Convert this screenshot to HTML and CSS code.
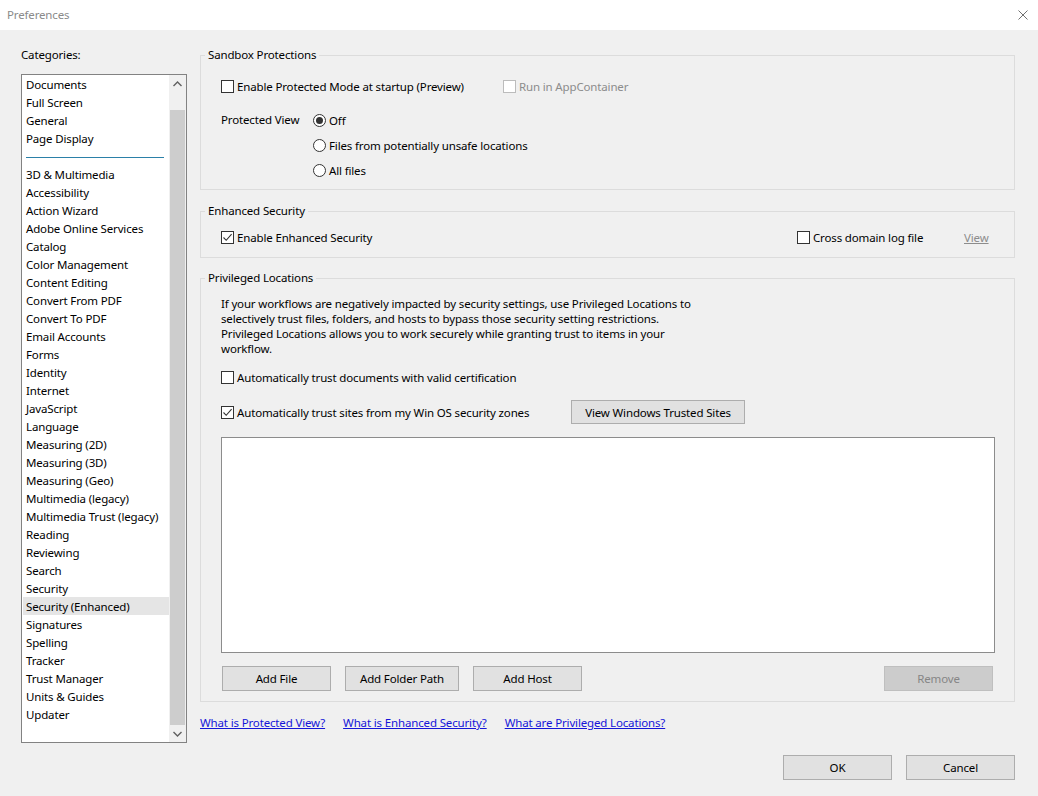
FILE: index.html
```html
<!DOCTYPE html>
<html lang="en">
<head>
  <meta charset="UTF-8" />
  <title>Preferences</title>
  <link rel="stylesheet" href="styles.css">
</head>
<body>

  <div class="titlebar">
    <span class="title">Preferences</span>
    <svg class="close-x" width="10" height="10" viewBox="0 0 10 10">
      <path d="M0.5 0.5 L9.5 9.5 M9.5 0.5 L0.5 9.5" stroke="#707070" stroke-width="1" fill="none"/>
    </svg>
  </div>

  <div class="main">
    <div class="sidebar">
      <div class="cat-label">Categories:</div>
      <div class="listbox">
        <div class="items">
          <div class="item">Documents</div>
          <div class="item">Full Screen</div>
          <div class="item">General</div>
          <div class="item">Page Display</div>
          <div class="separator"></div>
          <div class="item">3D &amp; Multimedia</div>
          <div class="item">Accessibility</div>
          <div class="item">Action Wizard</div>
          <div class="item">Adobe Online Services</div>
          <div class="item">Catalog</div>
          <div class="item">Color Management</div>
          <div class="item">Content Editing</div>
          <div class="item">Convert From PDF</div>
          <div class="item">Convert To PDF</div>
          <div class="item">Email Accounts</div>
          <div class="item">Forms</div>
          <div class="item">Identity</div>
          <div class="item">Internet</div>
          <div class="item">JavaScript</div>
          <div class="item">Language</div>
          <div class="item">Measuring (2D)</div>
          <div class="item">Measuring (3D)</div>
          <div class="item">Measuring (Geo)</div>
          <div class="item">Multimedia (legacy)</div>
          <div class="item">Multimedia Trust (legacy)</div>
          <div class="item">Reading</div>
          <div class="item">Reviewing</div>
          <div class="item">Search</div>
          <div class="item">Security</div>
          <div class="item selected">Security (Enhanced)</div>
          <div class="item">Signatures</div>
          <div class="item">Spelling</div>
          <div class="item">Tracker</div>
          <div class="item">Trust Manager</div>
          <div class="item">Units &amp; Guides</div>
          <div class="item">Updater</div>
        </div>
        <div class="scrollbar">
          <div class="sb-btn up">
            <svg width="9" height="6" viewBox="0 0 9 6"><path d="M0.5 5 L4.5 1 L8.5 5" stroke="#606060" stroke-width="1.4" fill="none"/></svg>
          </div>
          <div class="sb-track"><div class="sb-thumb"></div></div>
          <div class="sb-btn down">
            <svg width="9" height="6" viewBox="0 0 9 6"><path d="M0.5 1 L4.5 5 L8.5 1" stroke="#606060" stroke-width="1.4" fill="none"/></svg>
          </div>
        </div>
      </div>
    </div>

    <div class="content">
      <fieldset class="group">
        <legend>Sandbox Protections</legend>
        <div class="group-body sandbox">
          <div class="row">
            <label class="check wide">
              <span class="box"></span>
              Enable Protected Mode at startup (Preview)
            </label>
            <label class="check disabled">
              <span class="box"></span>
              Run in AppContainer
            </label>
          </div>
          <div class="pv">
            <div class="pv-label">Protected View</div>
            <div class="radios">
              <label class="radio">
                <svg width="13" height="13" viewBox="0 0 13 13"><circle cx="6.5" cy="6.5" r="6" fill="#fff" stroke="#333"/><circle cx="6.5" cy="6.5" r="3.5" fill="#333"/></svg>
                Off
              </label>
              <label class="radio">
                <svg width="13" height="13" viewBox="0 0 13 13"><circle cx="6.5" cy="6.5" r="6" fill="#fff" stroke="#333"/></svg>
                Files from potentially unsafe locations
              </label>
              <label class="radio">
                <svg width="13" height="13" viewBox="0 0 13 13"><circle cx="6.5" cy="6.5" r="6" fill="#fff" stroke="#333"/></svg>
                All files
              </label>
            </div>
          </div>
        </div>
      </fieldset>

      <fieldset class="group enhanced">
        <legend>Enhanced Security</legend>
        <div class="group-body">
          <div class="row">
            <label class="check">
              <span class="box"><svg width="11" height="11" viewBox="0 0 11 11"><path d="M1.5 5.5 L4.2 8.3 L9.6 2.2" stroke="#333" stroke-width="1.1" fill="none"/></svg></span>
              Enable Enhanced Security
            </label>
            <label class="check cross">
              <span class="box"></span>
              Cross domain log file
            </label>
            <span class="view-link">View</span>
          </div>
        </div>
      </fieldset>

      <fieldset class="group privileged">
        <legend>Privileged Locations</legend>
        <div class="group-body priv-body">
          <p class="info">
            If your workflows are negatively impacted by security settings, use Privileged Locations to<br>
            selectively trust files, folders, and hosts to bypass those security setting restrictions.<br>
            Privileged Locations allows you to work securely while granting trust to items in your<br>
            workflow.
          </p>
          <div class="row first">
            <label class="check">
              <span class="box"></span>
              Automatically trust documents with valid certification
            </label>
          </div>
          <div class="row tall">
            <label class="check zones">
              <span class="box"><svg width="11" height="11" viewBox="0 0 11 11"><path d="M1.5 5.5 L4.2 8.3 L9.6 2.2" stroke="#333" stroke-width="1.1" fill="none"/></svg></span>
              Automatically trust sites from my Win OS security zones
            </label>
            <button class="btn trusted">View Windows Trusted Sites</button>
          </div>
          <div class="locations"></div>
          <div class="loc-buttons">
            <button class="btn add-file">Add File</button>
            <button class="btn add-folder">Add Folder Path</button>
            <button class="btn add-host">Add Host</button>
            <button class="btn remove" disabled>Remove</button>
          </div>
        </div>
      </fieldset>

      <div class="links">
        <a href="#">What is Protected View?</a>
        <a href="#">What is Enhanced Security?</a>
        <a href="#">What are Privileged Locations?</a>
      </div>

      <div class="footer">
        <button class="btn">OK</button>
        <button class="btn">Cancel</button>
      </div>
    </div>
  </div>

</body>
</html>
```

FILE: styles.css
```css
body {
  margin: 0;
  padding: 0;
  width: 1038px;
  height: 796px;
  overflow: hidden;
  background-color: #f0f0f0;
  font-family: "Noto Sans", "Open Sans", sans-serif;
  font-size: 11.5px;
  letter-spacing: -0.15px;
  color: #000;
}

/* Barre de titre */
.titlebar {
  height: 30px;
  background: #fff;
  display: flex;
  align-items: center;
  justify-content: space-between;
  padding: 0 10px 0 7px;
}

.title {
  color: #8a8a8a;
  line-height: 16px;
}

.main {
  display: flex;
  padding: 17px 0 0 21px;
}

/* Colonne des categories */
.sidebar {
  width: 166px;
}

.cat-label {
  line-height: 16px;
  margin-bottom: 11px;
}

.listbox {
  height: 669px;
  box-sizing: border-box;
  border: 1px solid #828282;
  background: #fff;
  display: flex;
}

.items {
  flex: 1;
}

.item {
  height: 18px;
  line-height: 19px;
  margin-left: 1px;
  padding-left: 3px;
  white-space: nowrap;
}

.item.selected {
  background-color: #e5e5e5;
}

.separator {
  height: 1px;
  width: 138px;
  margin: 10px 0 7px 4px;
  background-color: #2b80a8;
}

.scrollbar {
  width: 17px;
  background: #f0f0f0;
  display: flex;
  flex-direction: column;
}

.sb-btn {
  height: 17px;
  display: flex;
  align-items: center;
  justify-content: center;
}

.sb-track {
  flex: 1;
  padding-top: 18px;
  display: flex;
}

.sb-thumb {
  flex: 1;
  margin: 0 1px;
  background: #cdcdcd;
}

/* Partie droite */
.content {
  width: 815px;
  margin-left: 13px;
}

.group {
  margin: 0;
  padding: 0;
  border: 1px solid #dcdcdc;
  min-width: 0;
}

.group legend {
  margin-left: 4px;
  padding: 0 3px;
  line-height: 16px;
}

.group-body {
  padding: 9px 0 11px 20px;
}

.sandbox {
  padding: 14px 0 10px 20px;
}

.enhanced {
  margin-top: 13px;
}

.privileged {
  margin-top: 12px;
}

.row {
  display: flex;
  align-items: center;
  height: 18px;
}

.check,
.radio {
  display: flex;
  align-items: center;
  gap: 3px;
  white-space: nowrap;
}

.box {
  width: 13px;
  height: 13px;
  box-sizing: border-box;
  border: 1px solid #333;
  background: #fff;
  display: flex;
  align-items: center;
  justify-content: center;
}

.check.wide {
  width: 282px;
}

.check.disabled {
  color: #8c8c8c;
}

.check.disabled .box {
  border-color: #bcbcbc;
}

.pv {
  display: flex;
  margin-top: 16px;
}

.pv-label {
  width: 92px;
  line-height: 18px;
}

.radios {
  display: flex;
  flex-direction: column;
  gap: 7px;
}

.radio {
  height: 18px;
}

.cross {
  width: 167px;
  margin-left: auto;
}

.view-link {
  width: 50px;
  color: #8c8c8c;
  text-decoration: underline;
}

.priv-body {
  padding: 10px 0 10px 20px;
}

.info {
  margin: 0;
  line-height: 15px;
}

.row.first {
  margin-top: 12px;
}

.row.tall {
  height: 24px;
  margin-top: 14px;
}

.check.zones {
  width: 350px;
}

.btn {
  height: 25px;
  box-sizing: border-box;
  background: #e1e1e1;
  border: 1px solid #adadad;
  font-family: inherit;
  font-size: 11.5px;
  letter-spacing: -0.15px;
  color: #000;
  padding: 0;
}

.btn.trusted {
  width: 174px;
  height: 24px;
}

.locations {
  width: 774px;
  height: 216px;
  box-sizing: border-box;
  margin-top: 13px;
  border: 1px solid #8c8c8c;
  background: #fff;
}

.loc-buttons {
  display: flex;
  margin: 13px 0 0 1px;
}

.loc-buttons .btn {
  width: 109px;
}

.loc-buttons .add-folder {
  width: 114px;
  margin-left: 14px;
}

.loc-buttons .add-host {
  margin-left: 14px;
}

.loc-buttons .remove {
  margin-left: auto;
  margin-right: 21px;
  background: #cccccc;
  border-color: #bfbfbf;
  color: #868686;
}

.links {
  display: flex;
  gap: 18px;
  margin-top: 13px;
  line-height: 16px;
}

.links a {
  color: #1515d8;
  text-decoration: underline;
}

.footer {
  display: flex;
  justify-content: flex-end;
  gap: 14px;
  margin-top: 24px;
}

.footer .btn {
  width: 109px;
}
```
